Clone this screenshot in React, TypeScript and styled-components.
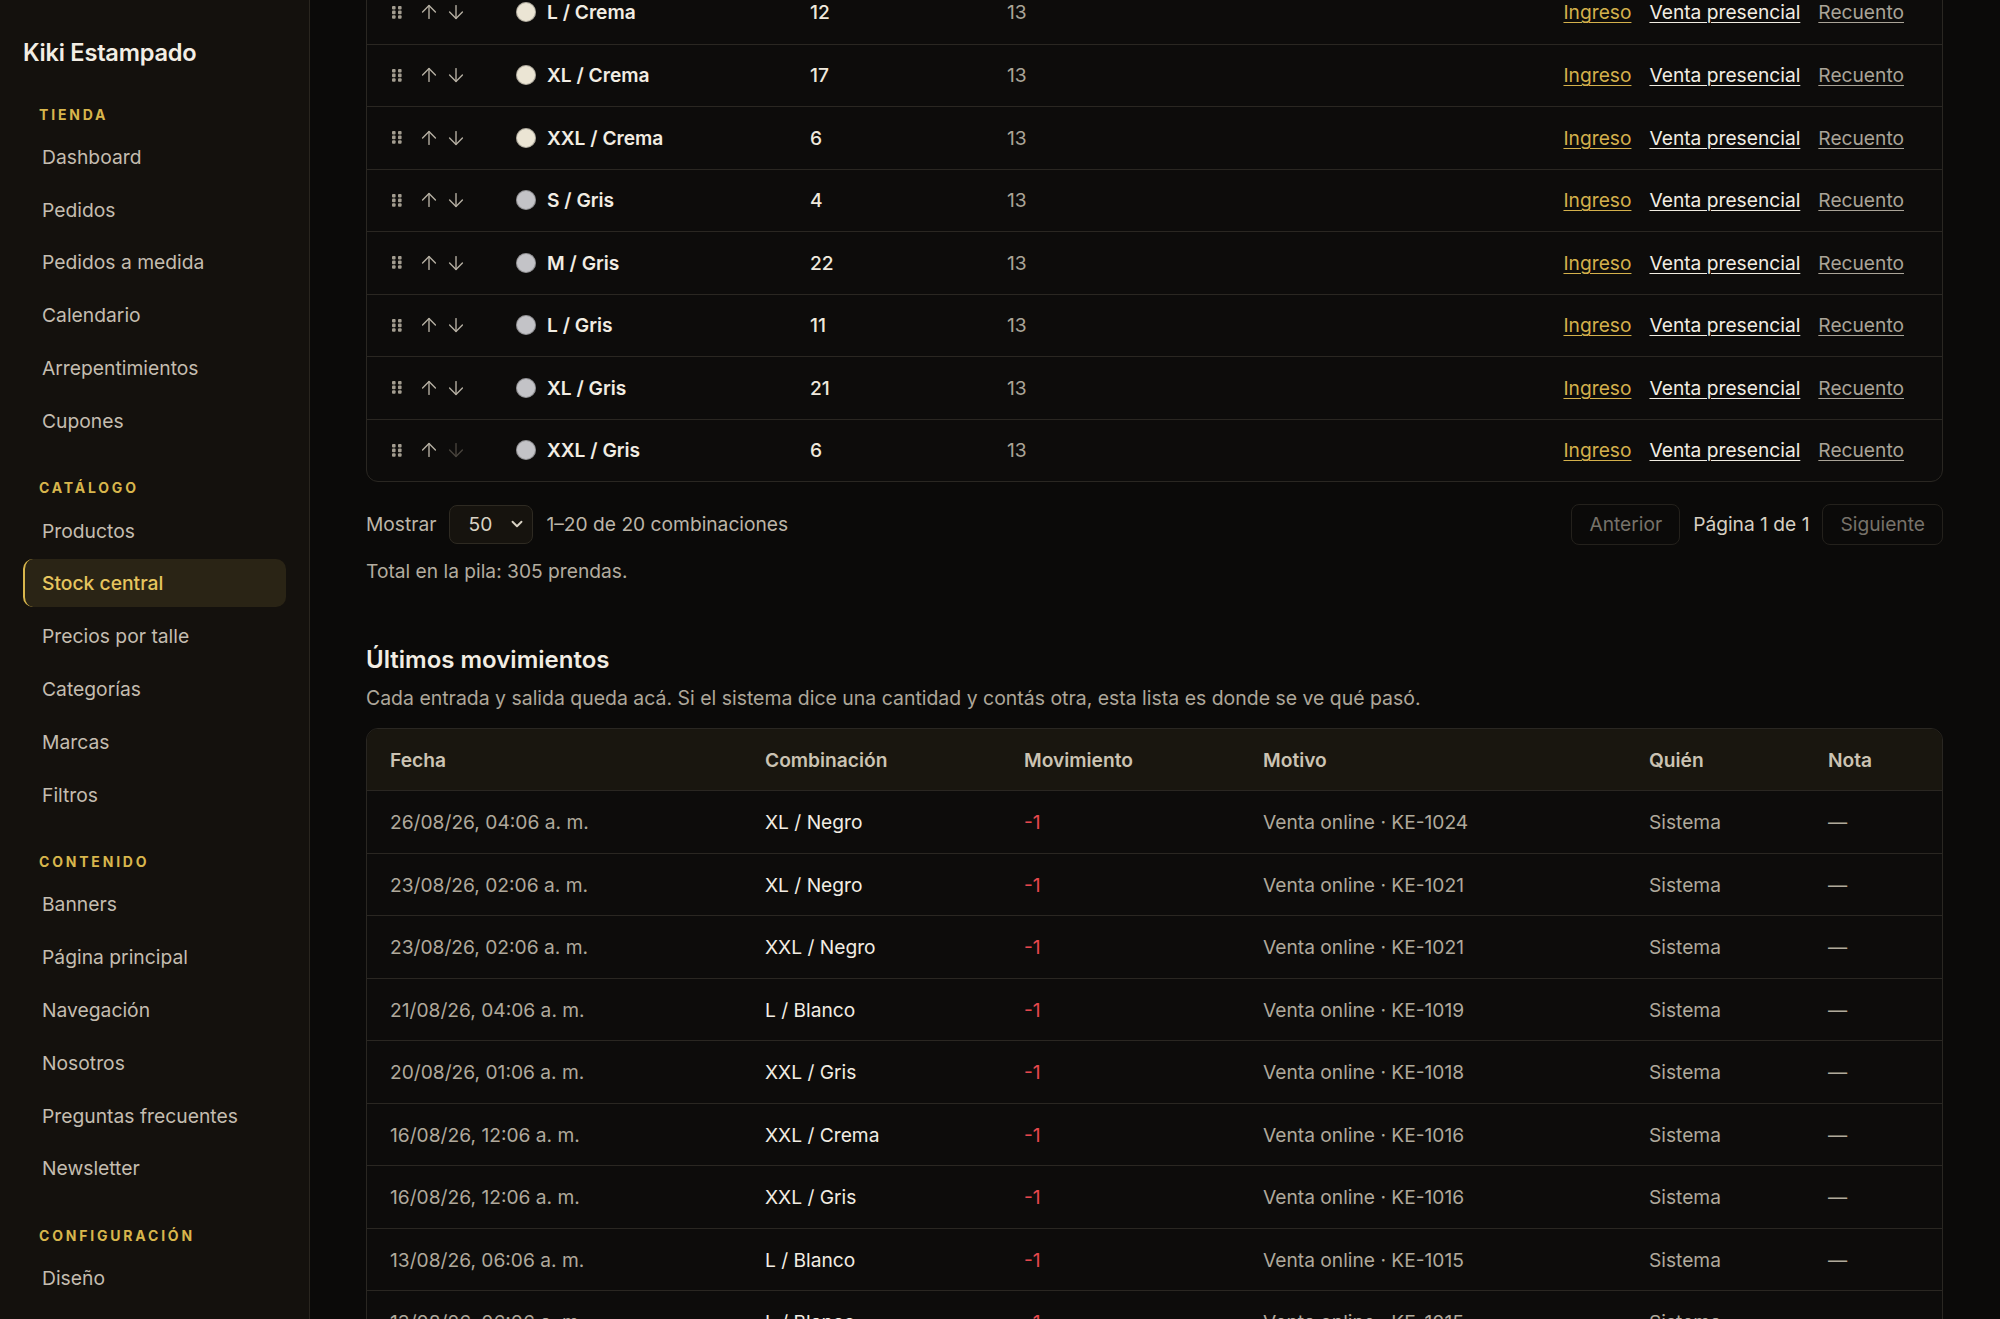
import { ArrowDown, ArrowUp, ChevronDown } from 'lucide-react';
import styled, { createGlobalStyle } from 'styled-components';

const GlobalStyle = createGlobalStyle`
	* { box-sizing: border-box; }
	body {
		margin: 0;
		background: #0b0a09;
		font-family: Inter, "Noto Sans", sans-serif;
		color: #ece6da;
	}
`;

const Shell = styled.div`
	display: flex;
	height: 100vh;
	overflow: hidden;
`;

const Sidebar = styled.aside`
	width: 310px;
	flex-shrink: 0;
	background: #14110d;
	border-right: 1px solid #2a261f;
	padding: 38px 23px 0;
	display: flex;
	flex-direction: column;
`;

const Brand = styled.div`
	font-size: 23.6px;
	font-weight: 600;
	line-height: 29px;
	color: #f3eee4;
	letter-spacing: -0.01em;
	margin-bottom: 38.5px;
`;

const Section = styled.div`
	display: flex;
	flex-direction: column;
	gap: 4.8px;
	& + & {
		margin-top: 34.5px;
	}
`;

const SectionLabel = styled.div`
	font-size: 14px;
	font-weight: 700;
	line-height: 18px;
	letter-spacing: 0.2em;
	color: #d8b64c;
	padding-left: 16px;
	margin-bottom: 4.5px;
`;

const NavItem = styled.div<{ $active?: boolean }>`
	height: 48px;
	display: flex;
	align-items: center;
	padding-left: ${(p) => (p.$active ? '17px' : '19px')};
	font-size: 19.3px;
	border-radius: 10px;
	color: ${(p) => (p.$active ? '#e6c55e' : '#c4bdb0')};
	font-weight: ${(p) => (p.$active ? 500 : 400)};
	background: ${(p) => (p.$active ? '#2a2415' : 'transparent')};
	border-left: ${(p) => (p.$active ? '2px solid #d8b64c' : 'none')};
`;

const Main = styled.main`
	flex: 1;
	min-width: 0;
	padding: 0 57px 0 56px;
	overflow: hidden;
	font-size: 19.2px;
`;

const StockCard = styled.div`
	margin-top: -20px;
	border: 1px solid #2a2722;
	border-radius: 12px;
	background: #0d0c0b;
	overflow: hidden;
`;

const StockRow = styled.div`
	height: 62.5px;
	display: grid;
	grid-template-columns: 124px 294px 197px 1fr auto;
	align-items: center;
	padding: 0 38px 0 25px;
	& + & {
		border-top: 1px solid #2a2722;
	}
`;

const Controls = styled.div`
	display: flex;
	align-items: center;
	gap: 20px;
	color: #b6b0a3;
`;

const Arrows = styled.div`
	display: flex;
	align-items: center;
	gap: 5px;
	margin-left: -4px;
`;

const ArrowBtn = styled.span<{ $disabled?: boolean }>`
	display: flex;
	color: ${(p) => (p.$disabled ? '#48443d' : '#b6b0a3')};
`;

const Variant = styled.div`
	display: flex;
	align-items: center;
	gap: 11px;
	font-weight: 600;
	color: #f2ede3;
`;

const Swatch = styled.span<{ $color: string }>`
	width: 20px;
	height: 20px;
	border-radius: 50%;
	background: ${(p) => p.$color};
	box-shadow: inset 0 0 0 1px rgba(0, 0, 0, 0.25);
`;

const Qty = styled.div<{ $muted?: boolean }>`
	font-weight: ${(p) => (p.$muted ? 400 : 500)};
	color: ${(p) => (p.$muted ? '#aaa498' : '#efe9dd')};
`;

const Links = styled.div`
	display: flex;
	gap: 18px;
`;

const ActionLink = styled.a<{ $tone: 'gold' | 'light' | 'muted' }>`
	color: ${(p) => (p.$tone === 'gold' ? '#d4b14c' : p.$tone === 'light' ? '#f2ede3' : '#aaa498')};
	text-decoration: underline;
	text-underline-offset: 3px;
	text-decoration-thickness: 1px;
	cursor: pointer;
`;

const Pager = styled.div`
	display: flex;
	align-items: center;
	justify-content: space-between;
	margin-top: 21.5px;
	color: #bcb5a8;
`;

const PagerGroup = styled.div`
	display: flex;
	align-items: center;
	gap: 13px;
`;

const SelectBox = styled.div`
	width: 84px;
	height: 39px;
	display: flex;
	align-items: center;
	justify-content: space-between;
	padding: 0 6px 0 18px;
	background: #16130e;
	border: 1px solid #2e2a22;
	border-radius: 8px;
	color: #d9d2c4;
`;

const PageButton = styled.button`
	height: 41px;
	padding: 0 17px;
	background: transparent;
	border: 1px solid #24211c;
	border-radius: 8px;
	font-family: inherit;
	font-size: 19.2px;
	color: #77726a;
`;

const PageInfo = styled.span`
	color: #d6cfc2;
`;

const Total = styled.p`
	margin: 14px 0 0;
	color: #b3ac9f;
`;

const Heading = styled.h2`
	margin: 62.5px 0 0;
	font-size: 24px;
	line-height: 30px;
	font-weight: 600;
	color: #f2ede3;
`;

const Lead = styled.p`
	margin: 10.7px 0 0;
	font-size: 19.45px;
	color: #aea79a;
`;

const LogCard = styled.div`
	margin-top: 18.7px;
	border: 1px solid #2a2722;
	border-radius: 12px;
	background: #0d0c0b;
	overflow: hidden;
`;

const LogRow = styled.div<{ $head?: boolean }>`
	display: grid;
	grid-template-columns: 375px 259px 239px 386px 179px 1fr;
	align-items: center;
	height: ${(p) => (p.$head ? '61px' : '62.5px')};
	background: ${(p) => (p.$head ? '#19160f' : 'transparent')};
	& + & {
		border-top: 1px solid #2a2722;
	}
`;

const Cell = styled.div<{ $tone?: 'head' | 'muted' | 'light' | 'red' }>`
	padding-left: 23px;
	font-weight: ${(p) => (p.$tone === 'head' ? 600 : 400)};
	color: ${(p) =>
		p.$tone === 'head'
			? '#cbc3b3'
			: p.$tone === 'light'
			? '#f2ede3'
			: p.$tone === 'red'
			? '#e5484d'
			: '#b0a99c'};
	white-space: nowrap;
`;

const Grip = () => (
	<svg width='10' height='13' viewBox='0 0 10 13' fill='#a39d90'>
		{[0, 1, 2].map((r) =>
			[0, 1].map((c) => <rect key={`${r}${c}`} x={c * 6} y={r * 4.6} width='3.6' height='3.6' rx='1' />)
		)}
	</svg>
);

const nav = [
	{ label: 'Tienda', items: ['Dashboard', 'Pedidos', 'Pedidos a medida', 'Calendario', 'Arrepentimientos', 'Cupones'] },
	{ label: 'Catálogo', items: ['Productos', 'Stock central', 'Precios por talle', 'Categorías', 'Marcas', 'Filtros'] },
	{ label: 'Contenido', items: ['Banners', 'Página principal', 'Navegación', 'Nosotros', 'Preguntas frecuentes', 'Newsletter'] },
	{ label: 'Configuración', items: ['Diseño'] },
];

const CREMA = '#ebe5d4';
const GRIS = '#c3c3c7';

const stock = [
	{ name: 'L / Crema', qty: 12, color: CREMA },
	{ name: 'XL / Crema', qty: 17, color: CREMA },
	{ name: 'XXL / Crema', qty: 6, color: CREMA },
	{ name: 'S / Gris', qty: 4, color: GRIS },
	{ name: 'M / Gris', qty: 22, color: GRIS },
	{ name: 'L / Gris', qty: 11, color: GRIS },
	{ name: 'XL / Gris', qty: 21, color: GRIS },
	{ name: 'XXL / Gris', qty: 6, color: GRIS },
];

const moves = [
	['26/08/26, 04:06 a. m.', 'XL / Negro', 'KE-1024'],
	['23/08/26, 02:06 a. m.', 'XL / Negro', 'KE-1021'],
	['23/08/26, 02:06 a. m.', 'XXL / Negro', 'KE-1021'],
	['21/08/26, 04:06 a. m.', 'L / Blanco', 'KE-1019'],
	['20/08/26, 01:06 a. m.', 'XXL / Gris', 'KE-1018'],
	['16/08/26, 12:06 a. m.', 'XXL / Crema', 'KE-1016'],
	['16/08/26, 12:06 a. m.', 'XXL / Gris', 'KE-1016'],
	['13/08/26, 06:06 a. m.', 'L / Blanco', 'KE-1015'],
	['13/08/26, 06:06 a. m.', 'L / Blanco', 'KE-1015'],
];

const App = () => (
	<>
		<GlobalStyle />
		<Shell>
			<Sidebar>
				<Brand>Kiki Estampado</Brand>
				{nav.map((section) => (
					<Section key={section.label}>
						<SectionLabel>{section.label.toUpperCase()}</SectionLabel>
						{section.items.map((item) => (
							<NavItem key={item} $active={item === 'Stock central'}>
								{item}
							</NavItem>
						))}
					</Section>
				))}
			</Sidebar>
			<Main>
				<StockCard>
					{stock.map((row, i) => (
						<StockRow key={row.name}>
							<Controls>
								<Grip />
								<Arrows>
									<ArrowBtn>
										<ArrowUp size={22} strokeWidth={1.5} />
									</ArrowBtn>
									<ArrowBtn $disabled={i === stock.length - 1}>
										<ArrowDown size={22} strokeWidth={1.5} />
									</ArrowBtn>
								</Arrows>
							</Controls>
							<Variant>
								<Swatch $color={row.color} />
								{row.name}
							</Variant>
							<Qty>{row.qty}</Qty>
							<Qty $muted>13</Qty>
							<Links>
								<ActionLink $tone='gold'>Ingreso</ActionLink>
								<ActionLink $tone='light'>Venta presencial</ActionLink>
								<ActionLink $tone='muted'>Recuento</ActionLink>
							</Links>
						</StockRow>
					))}
				</StockCard>
				<Pager>
					<PagerGroup>
						<span>Mostrar</span>
						<SelectBox>
							50
							<ChevronDown size={18} strokeWidth={2.5} />
						</SelectBox>
						<span>1–20 de 20 combinaciones</span>
					</PagerGroup>
					<PagerGroup>
						<PageButton disabled>Anterior</PageButton>
						<PageInfo>Página 1 de 1</PageInfo>
						<PageButton disabled>Siguiente</PageButton>
					</PagerGroup>
				</Pager>
				<Total>Total en la pila: 305 prendas.</Total>
				<Heading>Últimos movimientos</Heading>
				<Lead>
					Cada entrada y salida queda acá. Si el sistema dice una cantidad y contás otra, esta lista es donde se ve qué
					pasó.
				</Lead>
				<LogCard>
					<LogRow $head>
						{['Fecha', 'Combinación', 'Movimiento', 'Motivo', 'Quién', 'Nota'].map((h) => (
							<Cell key={h} $tone='head'>
								{h}
							</Cell>
						))}
					</LogRow>
					{moves.map(([date, combo, order], i) => (
						<LogRow key={i}>
							<Cell>{date}</Cell>
							<Cell $tone='light'>{combo}</Cell>
							<Cell $tone='red'>-1</Cell>
							<Cell>Venta online · {order}</Cell>
							<Cell>Sistema</Cell>
							<Cell>—</Cell>
						</LogRow>
					))}
				</LogCard>
			</Main>
		</Shell>
	</>
);

export default App;
